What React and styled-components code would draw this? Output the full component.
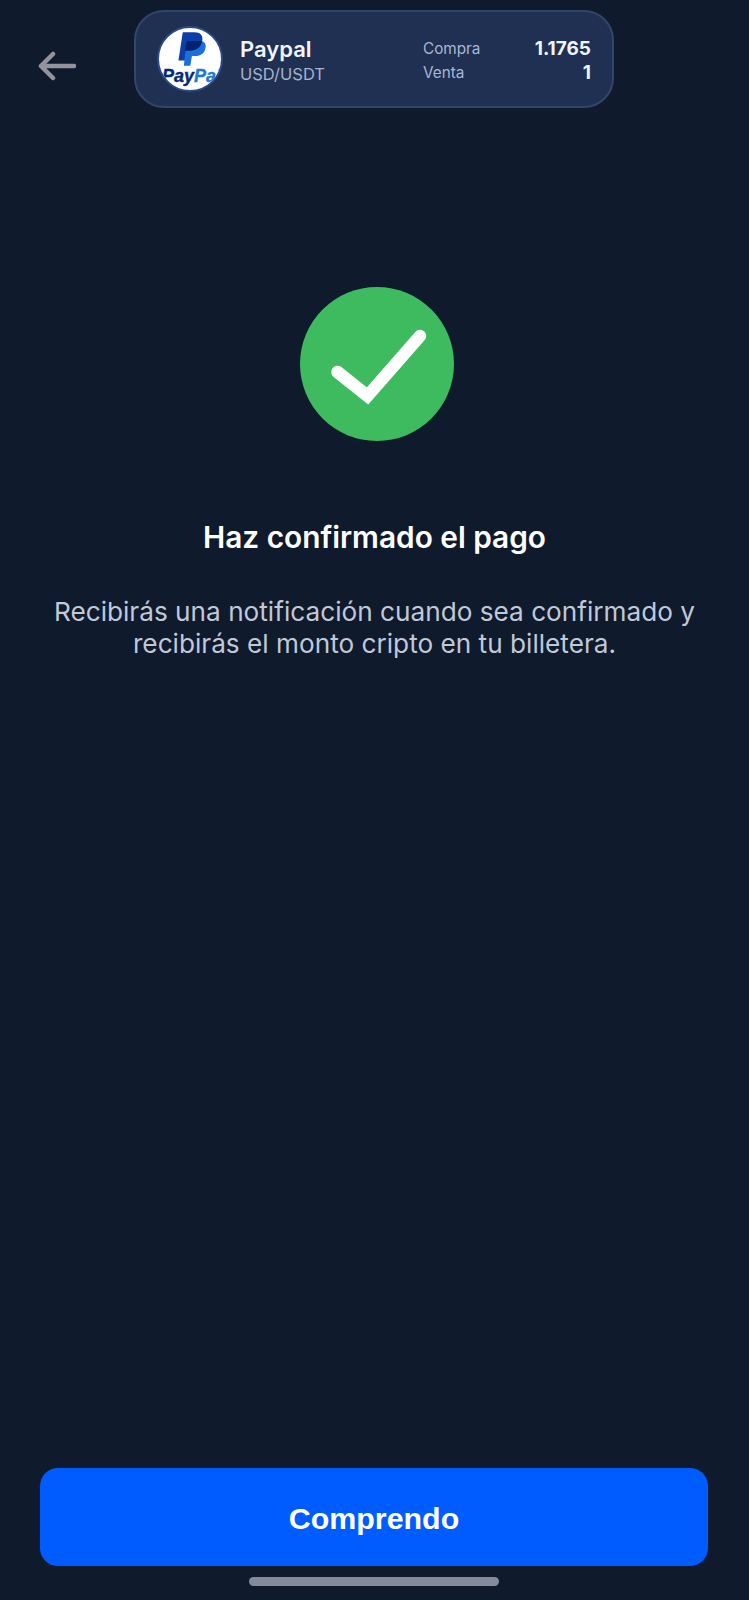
import styled, { createGlobalStyle } from "styled-components";

const GlobalStyle = createGlobalStyle`
  html, body {
    margin: 0;
    padding: 0;
    background: #0f1a2c;
    font-family: "Inter", "Liberation Sans", sans-serif;
  }
  * {
    box-sizing: border-box;
  }
`;

const Page = styled.div`
  width: 749px;
  height: 1600px;
  display: flex;
  flex-direction: column;
  background: #0f1a2c;
  padding: 10px 0 14px;
`;

const Header = styled.header`
  display: flex;
  align-items: center;
  gap: 58px;
  padding-left: 38px;
`;

const BackIcon = styled.svg`
  width: 38px;
  height: 30px;
  flex: none;
  margin-top: 14px;
`;

const RatePill = styled.div`
  width: 480px;
  height: 98px;
  display: flex;
  align-items: center;
  padding: 0 21px;
  background: #1f3052;
  border: 2px solid #34456a;
  border-radius: 30px;
`;

const LogoCircle = styled.div`
  width: 66px;
  height: 66px;
  flex: none;
  border-radius: 50%;
  background: #fff;
  border: 2px solid #2a4a86;
  overflow: hidden;
  margin-right: 17px;
`;

const Names = styled.div`
  width: 183px;
  display: flex;
  flex-direction: column;
  gap: 2px;
  padding-top: 2px;
`;

const Name = styled.div`
  font-size: 22px;
  line-height: 26px;
  font-weight: 600;
  color: #f1f5fb;
`;

const Pair = styled.div`
  font-size: 16.5px;
  line-height: 20px;
  color: #a5b3cd;
`;

const Rates = styled.div`
  flex: 1;
  display: grid;
  grid-template-columns: 1fr auto;
  row-gap: 4px;
  align-items: center;
  padding-top: 3px;
`;

const RateLabel = styled.div`
  font-size: 15.3px;
  line-height: 20px;
  color: #a9b7d1;
`;

const RateValue = styled.div`
  font-size: 19px;
  line-height: 20px;
  font-weight: 700;
  color: #f1f5fb;
  text-align: right;
`;

const Main = styled.main`
  display: flex;
  flex-direction: column;
  align-items: center;
  padding-top: 179px;
`;

const SuccessBadge = styled.div`
  width: 154px;
  height: 154px;
  margin-left: 4px;
  border-radius: 50%;
  background: #3dbb5e;
  display: flex;
  align-items: center;
  justify-content: center;
`;

const Title = styled.h1`
  margin: 78px 0 0;
  font-size: 29.8px;
  line-height: 36px;
  font-weight: 600;
  color: #fff;
`;

const Message = styled.p`
  margin: 41px 0 0;
  font-size: 26.2px;
  line-height: 32px;
  font-weight: 400;
  color: #c0c9d8;
  text-align: center;
`;

const Footer = styled.footer`
  margin-top: auto;
  padding-right: 1px;
  display: flex;
  flex-direction: column;
  align-items: center;
  gap: 11px;
`;

const ConfirmButton = styled.button`
  width: 668px;
  height: 98px;
  padding: 3px 0 0;
  border: 0;
  border-radius: 18px;
  background: #005cff;
  color: #fff;
  font-family: "Liberation Sans", Arial, sans-serif;
  font-size: 30.4px;
  font-weight: 700;
`;

const HomeBar = styled.div`
  width: 250px;
  height: 9px;
  border-radius: 5px;
  background: #858b98;
`;

const PaypalLogo = () => (
  <svg width="62" height="62" viewBox="0 0 62 62">
    <g transform="translate(0 0) scale(1.08)">
      <path d="M22 4 H33 C39 4 41 8 40 12 C39 18 34 21 29 21 H26 L24.5 30 H18 Z" fill="#0b3fa8" />
      <path d="M25.5 12 H38 C43 12 44 16 43 19 C42 24 38 26 33 26 H30.5 L29 35 H23 Z" fill="#1a6fd8" />
      <path d="M25.5 12 H40 C39 18 34 21 29 21 H24 Z" fill="#04226e" />
    </g>
    <text x="3" y="54" fontFamily="Liberation Sans, Arial, sans-serif" fontSize="18" fontWeight="700" fontStyle="italic" strokeWidth="0.4">
      <tspan fill="#04297c" stroke="#04297c">Pay</tspan>
      <tspan fill="#1d79d6" stroke="#1d79d6">Pal</tspan>
    </text>
  </svg>
);

export default function App() {
  return (
    <Page>
      <GlobalStyle />
      <Header>
        <BackIcon viewBox="0 0 38 30" fill="none" stroke="#92939b" strokeWidth="4.5" strokeLinecap="round" strokeLinejoin="round">
          <path d="M36 15 H3 M15 3 L3 15 L15 27" />
        </BackIcon>
        <RatePill>
          <LogoCircle>
            <PaypalLogo />
          </LogoCircle>
          <Names>
            <Name>Paypal</Name>
            <Pair>USD/USDT</Pair>
          </Names>
          <Rates>
            <RateLabel>Compra</RateLabel>
            <RateValue>1.1765</RateValue>
            <RateLabel>Venta</RateLabel>
            <RateValue>1</RateValue>
          </Rates>
        </RatePill>
      </Header>
      <Main>
        <SuccessBadge>
          <svg width="154" height="154" viewBox="0 0 154 154" fill="none">
            <path d="M37.5 85 L67.5 109 L120 49" stroke="#fff" strokeWidth="12.5" strokeLinecap="round" />
          </svg>
        </SuccessBadge>
        <Title>Haz confirmado el pago</Title>
        <Message>
          Recibirás una notificación cuando sea confirmado y
          <br />
          recibirás el monto cripto en tu billetera.
        </Message>
      </Main>
      <Footer>
        <ConfirmButton>Comprendo</ConfirmButton>
        <HomeBar />
      </Footer>
    </Page>
  );
}
